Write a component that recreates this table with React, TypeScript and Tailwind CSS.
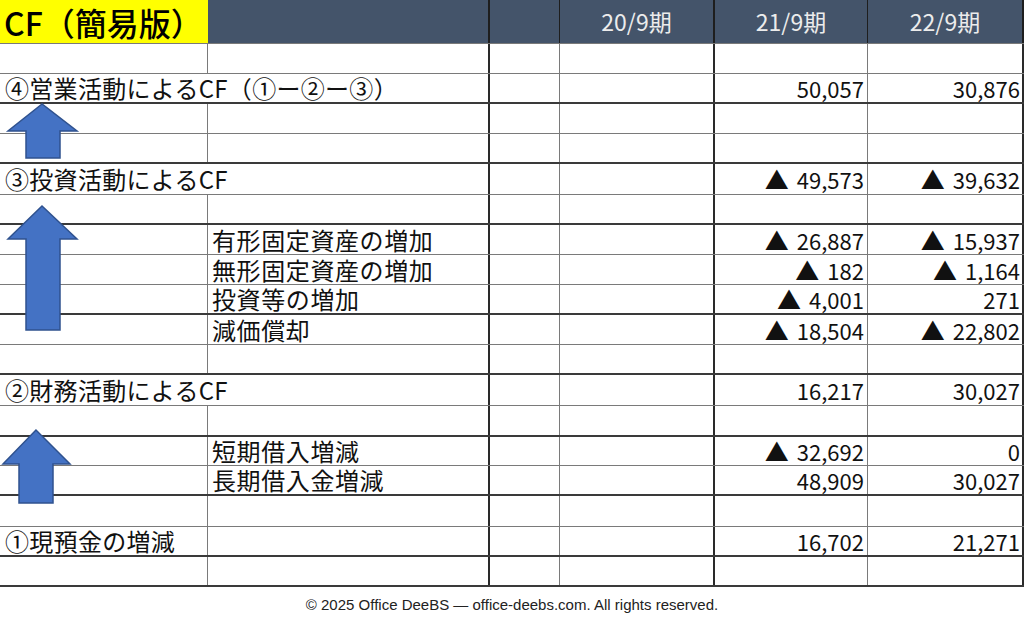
import React from 'react'

type Row = {
  h: number
  thick: boolean
  label?: string
  span?: boolean
  sub?: string
  v21?: string
  v22?: string
}

const ROWS: Row[] = [
  { h: 30, thick: false },
  { h: 30, thick: true, label: '④営業活動によるCF（①ー②ー③）', span: true, v21: '50,057', v22: '30,876' },
  { h: 30, thick: false },
  { h: 30, thick: true },
  { h: 31, thick: false, label: '③投資活動によるCF', span: true, v21: '▲49,573', v22: '▲39,632' },
  { h: 30, thick: true },
  { h: 30, thick: false, sub: '有形固定資産の増加', v21: '▲26,887', v22: '▲15,937' },
  { h: 30, thick: false, sub: '無形固定資産の増加', v21: '▲182', v22: '▲1,164' },
  { h: 30, thick: true, sub: '投資等の増加', v21: '▲4,001', v22: '271' },
  { h: 30, thick: false, sub: '減価償却', v21: '▲18,504', v22: '▲22,802' },
  { h: 30, thick: true },
  { h: 31, thick: false, label: '②財務活動によるCF', span: true, v21: '16,217', v22: '30,027' },
  { h: 31, thick: true },
  { h: 29, thick: false, sub: '短期借入増減', v21: '▲32,692', v22: '0' },
  { h: 30, thick: true, sub: '長期借入金増減', v21: '48,909', v22: '30,027' },
  { h: 31, thick: false },
  { h: 30, thick: true, label: '①現預金の増減', v21: '16,702', v22: '21,271' },
  { h: 30, thick: true },
]

const font = { fontFamily: '"Noto Sans CJK JP", "Noto Sans", sans-serif' }

function Amount({ value }: { value?: string }) {
  if (!value) return null
  if (value.startsWith('▲')) {
    return (
      <>
        <span className="text-[24px] mr-[8px]">▲</span>
        <span>{value.slice(1)}</span>
      </>
    )
  }
  return <span>{value}</span>
}

function Arrows() {
  return (
    <svg
      className="absolute left-0 top-0 pointer-events-none"
      width="100"
      height="587"
      viewBox="0 0 100 587"
    >
      <g fill="#4472c4" stroke="#2f528f" strokeWidth="1.5" strokeLinejoin="miter">
        <polygon points="42,104 8,131 26,131 26,158 60,158 60,131 77,131" />
        <polygon points="42,206 8,239 26,239 26,330 60,330 60,239 77,239" />
        <polygon points="36,430 3,464 19,464 19,503 53,503 53,464 70,464" />
      </g>
    </svg>
  )
}

export default function App() {
  return (
    <div className="w-[1024px] h-[623px] bg-white overflow-hidden" style={font}>
      <div className="relative">
        {/* header */}
        <div className="grid grid-cols-[208px_282px_70px_155px_153px_156px] h-[44px] border-b border-[#7a7a7a]">
          <div className="bg-[#ffff00] flex items-center pl-[4px] text-[32px] leading-none font-medium text-black whitespace-nowrap">
            CF（簡易版）
          </div>
          <div className="bg-[#44546a] border-r-2 border-[#1e1e1e]" />
          <div className="bg-[#44546a] border-r border-[#1e1e1e]" />
          <div className="bg-[#44546a] border-r-2 border-[#1e1e1e] flex items-center justify-center text-[23px] text-[#ececec]">
            20/9期
          </div>
          <div className="bg-[#44546a] border-r border-[#1e1e1e] flex items-center justify-center text-[23px] text-[#ececec]">
            21/9期
          </div>
          <div className="bg-[#44546a] border-r-2 border-[#1e1e1e] flex items-center justify-center text-[23px] text-[#ececec]">
            22/9期
          </div>
        </div>

        {ROWS.map((r, i) => (
          <div
            key={i}
            className={`grid grid-cols-[208px_282px_70px_155px_153px_156px] ${
              r.thick ? 'border-b-2 border-[#3a3a3a]' : 'border-b border-[#7a7a7a]'
            }`}
            style={{ height: r.h }}
          >
            {r.span ? (
              <div className="col-span-2 border-r-2 border-[#2a2a2a] flex items-center pl-[5px] text-[24px] leading-none tracking-[0.3px] text-[#111] whitespace-nowrap">
                {r.label}
              </div>
            ) : (
              <>
                <div className="border-r border-[#7a7a7a] flex items-center pl-[5px] text-[24px] leading-none tracking-[0.3px] text-[#111] whitespace-nowrap">
                  {r.label}
                </div>
                <div className="border-r-2 border-[#2a2a2a] flex items-center pl-[4px] text-[24px] leading-none tracking-[0.6px] text-[#111] whitespace-nowrap">
                  {r.sub}
                </div>
              </>
            )}
            <div className="border-r border-[#7a7a7a]" />
            <div className="border-r-2 border-[#2a2a2a]" />
            <div className="border-r border-[#7a7a7a] flex items-center justify-end pr-[3px] text-[22px] leading-none text-[#111] whitespace-nowrap">
              <Amount value={r.v21} />
            </div>
            <div className="border-r-2 border-[#2a2a2a] flex items-center justify-end pr-[2px] text-[22px] leading-none text-[#111] whitespace-nowrap">
              <Amount value={r.v22} />
            </div>
          </div>
        ))}

        <Arrows />
      </div>

      <div
        className="h-[36px] flex items-center justify-center text-[15px] text-[#222]"
        style={{ fontFamily: '"Liberation Sans", Arial, sans-serif' }}
      >
        © 2025 Office DeeBS — office-deebs.com. All rights reserved.
      </div>
    </div>
  )
}
